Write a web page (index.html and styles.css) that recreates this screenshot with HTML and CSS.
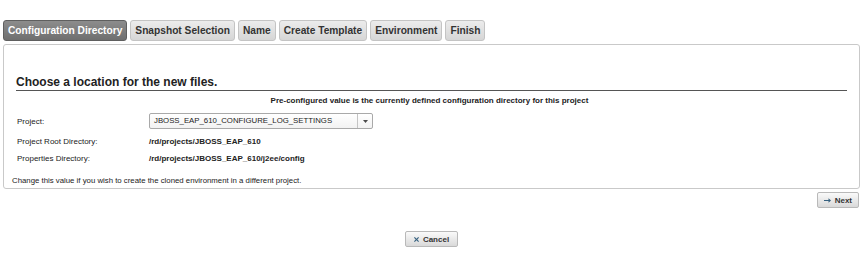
FILE: index.html
```html
<!DOCTYPE html>
<html lang="en">
<head>
    <meta charset="UTF-8">
    <title>Clone Environment</title>
    <link rel="stylesheet" href="styles.css">
</head>
<body>
    <div class="wizard">
        <ul class="tabs">
            <li class="tab active">Configuration Directory</li>
            <li class="tab">Snapshot Selection</li>
            <li class="tab">Name</li>
            <li class="tab">Create Template</li>
            <li class="tab">Environment</li>
            <li class="tab">Finish</li>
        </ul>
        <div class="panel">
            <h2 class="panel-title">Choose a location for the new files.</h2>
            <p class="hint">Pre-configured value is the currently defined configuration directory for this project</p>
            <div class="row first">
                <span class="label">Project:</span>
                <div class="select">
                    <span class="select-value">JBOSS_EAP_610_CONFIGURE_LOG_SETTINGS</span>
                    <span class="select-arrow"><svg width="5" height="3" viewBox="0 0 5 3"><path d="M0 0h5L2.5 3z" fill="#4a4a4a"/></svg></span>
                </div>
            </div>
            <div class="row">
                <span class="label">Project Root Directory:</span>
                <span class="value">/rd/projects/JBOSS_EAP_610</span>
            </div>
            <div class="row">
                <span class="label">Properties Directory:</span>
                <span class="value">/rd/projects/JBOSS_EAP_610/j2ee/config</span>
            </div>
            <p class="note">Change this value if you wish to create the cloned environment in a different project.</p>
        </div>
        <div class="actions">
            <button type="button" class="btn">
                <svg class="btn-icon" width="7" height="5" viewBox="0 0 7 5"><path d="M0 2h4.5V0.3L7 2.5 4.5 4.7V3H0z" fill="#35607f"/></svg>Next
            </button>
        </div>
        <div class="cancel">
            <button type="button" class="btn wide">
                <svg class="btn-icon" width="5" height="5" viewBox="0 0 5 5"><path d="M0.8 0L2.5 1.7 4.2 0 5 0.8 3.3 2.5 5 4.2 4.2 5 2.5 3.3 0.8 5 0 4.2 1.7 2.5 0 0.8z" fill="#35607f"/></svg>Cancel
            </button>
        </div>
    </div>
</body>
</html>
```

FILE: styles.css
```css
*{
    margin: 0;
    padding: 0;
    box-sizing: border-box;
}
body{
    font-family: "Liberation Sans", Arial, sans-serif;
    color: #222;
    background: #fff;
}
.wizard{
    padding: 20px 5px 0 3px;
}
.tabs{
    list-style: none;
    display: flex;
    gap: 3px;
    margin-bottom: 3px;
}
.tab{
    font-size: 10.2px;
    font-weight: bold;
    color: #333;
    padding: 0 4px;
    height: 21px;
    line-height: 19px;
    border: 1px solid #c4c4c4;
    border-radius: 3px;
    background: linear-gradient(#ececec, #d6d6d6);
}
.tab.active{
    background: linear-gradient(#8c8c8c, #6f6f6f);
    border-color: #5f5f5f;
    color: #fff;
}
.panel{
    border: 1px solid #c9c9c9;
    border-radius: 3px;
    padding: 31px 12px 0 8px;
    height: 145px;
}
.panel-title{
    font-size: 12px;
    line-height: 13px;
    font-weight: bold;
    color: #222;
    margin-left: 4px;
    padding-bottom: 1px;
    border-bottom: 1px solid #555;
}
.hint{
    text-align: center;
    font-size: 8px;
    font-weight: bold;
    margin-top: 5px;
    line-height: 10px;
}
.row{
    display: flex;
    align-items: center;
    font-size: 8px;
    margin-left: 5px;
    height: 17px;
}
.row.first{
    height: 16px;
    margin-top: 7px;
    margin-bottom: 4px;
}
.label{
    width: 132px;
}
.value{
    font-weight: bold;
}
.select{
    display: flex;
    width: 224px;
    height: 16px;
    border: 1px solid #a9a9a9;
    border-radius: 2px;
    background: linear-gradient(#fff, #f2f2f2);
}
.select-value{
    flex: 1;
    padding-left: 4px;
    line-height: 14px;
    font-size: 7.8px;
}
.select-arrow{
    width: 15px;
    border-left: 1px solid #c4c4c4;
    display: flex;
    align-items: center;
    justify-content: center;
}
.note{
    font-size: 7.8px;
    line-height: 10px;
    margin-top: 9px;
    color: #222;
}
.actions{
    display: flex;
    justify-content: flex-end;
    padding: 3px 1px 0 0;
}
.cancel{
    display: flex;
    justify-content: center;
    padding-top: 23px;
}
.btn{
    display: flex;
    align-items: center;
    font-family: inherit;
    font-size: 8px;
    font-weight: bold;
    color: #333;
    height: 16px;
    padding: 0 6px;
    border: 1px solid #b9b9b9;
    border-radius: 2px;
    background: linear-gradient(#fafafa, #d9d9d9);
}
.btn.wide{
    padding: 0 8px;
}
.btn-icon{
    margin-right: 4px;
}
```
